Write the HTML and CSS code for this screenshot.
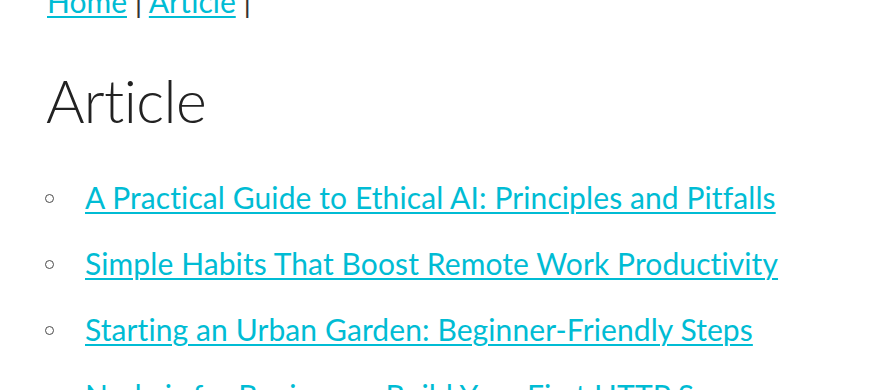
FILE: index.html
```html
<!DOCTYPE html>
<html lang="en">
<head>
<meta charset="utf-8">
<title>Article</title>
<link rel="stylesheet" href="styles.css">
</head>
<body>
<div class="page">
  <nav class="crumbs"><a href="#">Home</a> | <a href="#">Article</a> |</nav>
  <h1 class="title">Article</h1>
  <ul class="articles">
    <li><a href="#">A Practical Guide to Ethical AI: Principles and Pitfalls</a></li>
    <li><a href="#">Simple Habits That Boost Remote Work Productivity</a></li>
    <li><a href="#">Starting an Urban Garden: Beginner-Friendly Steps</a></li>
    <li><a href="#">Node.js for Beginners: Build Your First HTTP Server</a></li>
  </ul>
</div>
</body>
</html>
```
FILE: styles.css
```css
html, body {
  margin: 0;
  padding: 0;
  background: #ffffff;
}
body {
  font-family: "Lato", "Liberation Sans", sans-serif;
  color: #333333;
  overflow: hidden;
}
.page {
  padding: 0 45px;
  margin-top: -21px;
}
a {
  color: #00bcd4;
  text-decoration: underline;
  text-decoration-thickness: 2px;
  text-underline-offset: 3px;
}
.crumbs {
  font-size: 30px;
  line-height: 44px;
  color: #333333;
  padding-left: 2px;
}
.title {
  font-size: 59px;
  font-weight: 300;
  letter-spacing: -0.6px;
  line-height: 72px;
  margin: 42px 0 0 0;
  padding-left: 1px;
  color: #222222;
}
.articles {
  list-style: none;
  margin: 38px 0 0 0;
  padding: 0;
  font-size: 30px;
  letter-spacing: 0.1px;
}
.articles li {
  display: flex;
  align-items: center;
  line-height: 44px;
  margin-bottom: 22px;
}
.articles li::before {
  content: "";
  flex: none;
  width: 7px;
  height: 7px;
  border: 1.6px solid #4a4a4a;
  border-radius: 50%;
  margin: 3px 31px 0 0;
}
```
